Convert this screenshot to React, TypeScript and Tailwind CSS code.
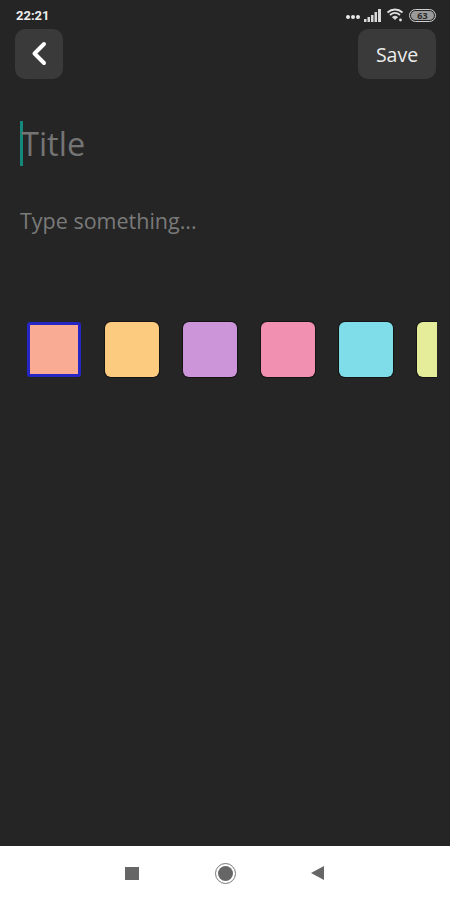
import React from "react";

function StatusIcons() {
  return (
    <div className="flex items-center gap-[3px]">
      <div className="flex items-center gap-[1px] mt-[4px]">
        <div className="w-[4px] h-[4px] rounded-full bg-white/90" />
        <div className="w-[4px] h-[4px] rounded-full bg-white/90" />
        <div className="w-[4px] h-[4px] rounded-full bg-white/90" />
      </div>
      <svg width="17" height="13" viewBox="0 0 17 13" fill="#d8d8d8" className="ml-[1px]">
        <rect x="0" y="10" width="2.500" height="3" />
        <rect x="3.500" y="8" width="2.500" height="5" />
        <rect x="7" y="6" width="2.500" height="7" />
        <rect x="10.500" y="3" width="2.500" height="10" />
        <rect x="14" y="0" width="3" height="13" />
      </svg>
      <svg width="18" height="14" viewBox="0 0 17 14" fill="none" stroke="#e0e0e0" className="ml-[2px]">
        <path d="M1 4.500C5.500 .5 11.500 .5 16 4.500" strokeWidth="1.800" />
        <path d="M3.500 7C6.500 4.500 10.500 4.500 13.500 7" strokeWidth="1.800" />
        <path d="M8.500 11.500L6 9C7.500 8 9.500 8 11 9Z" fill="#e0e0e0" strokeWidth="1" />
        <circle cx="14" cy="12" r="1.400" fill="#e0e0e0" stroke="none" />
      </svg>
      <div className="ml-[2px] w-[27px] h-[13px] rounded-full border border-[#d0d0d0] p-[1px] flex">
        <div className="w-full rounded-full bg-[#9a9a9a] flex items-center justify-center text-[9px] leading-none font-bold text-[#2a2a2a]">
          63
        </div>
      </div>
    </div>
  );
}

const swatches = ["#f9ab93", "#fdcb80", "#cd95d9", "#f290b1", "#7fdde9", "#e5ed9b"];

export default function App() {
  return (
    <div className="w-[450px] h-[900px] flex flex-col overflow-hidden bg-[#252525] font-['Open_Sans',sans-serif]">
      <div className="flex-1 flex flex-col min-h-0">
        <div className="h-[29px] pl-4 pr-[14px] pt-[8px] flex items-start justify-between">
          <span className="text-[13px] leading-[15px] font-bold text-[#eeeeee] font-['Roboto',sans-serif]">22:21</span>
          <StatusIcons />
        </div>

        <div className="flex items-center justify-between pl-[15px] pr-[14px]">
          <button className="w-[48px] h-[50px] rounded-[10px] bg-[#3a3a3a] flex items-center justify-center">
            <svg width="20" height="26" viewBox="0 0 20 26" fill="none" stroke="#ffffff" strokeWidth="4" strokeLinecap="round" strokeLinejoin="round">
              <path d="M15 3L5.500 12.500L15 22" />
            </svg>
          </button>
          <button className="w-[78px] h-[50px] pt-[2px] rounded-[10px] bg-[#3a3a3a] text-[19.5px] text-[#ececec] flex items-center justify-center">
            Save
          </button>
        </div>

        <div className="mt-[42px] pl-5 flex items-center h-[45px]">
          <div className="w-[3px] h-[45px] bg-[#14887a]" />
          <span className="text-[32.5px] leading-[45px] text-[#747474] -ml-[2px]">Title</span>
        </div>

        <div className="mt-[41px] pl-5 text-[21.5px] leading-[28px] text-[#7a7a7a]">Type something...</div>

        <div className="mt-[86px] ml-[27px] w-[410px] h-[57px] pt-[1px] overflow-hidden flex gap-[24px]">
          {swatches.map((c, i) => (
            <div
              key={c}
              style={{ backgroundColor: c }}
              className={
                i === 0
                  ? "w-[54px] h-[55px] shrink-0 rounded-[3px] border-[3px] border-[#2626c4]"
                  : "w-[54px] h-[55px] shrink-0 rounded-[6px] shadow-[0_0_0_1px_#141414]"
              }
            />
          ))}
        </div>
      </div>

      <div className="h-[54px] shrink-0 bg-white flex items-center justify-center pr-[2px]">
        <div className="w-[14px] h-[13px] bg-[#666666]" />
        <div className="ml-[76px] w-[21px] h-[21px] rounded-full border border-[#777777] flex items-center justify-center">
          <div className="w-[15px] h-[15px] rounded-full bg-[#666666]" />
        </div>
        <svg width="13" height="14" viewBox="0 0 13 14" className="ml-[75px]">
          <path d="M13 0V14L0 7Z" fill="#666666" />
        </svg>
      </div>
    </div>
  );
}
